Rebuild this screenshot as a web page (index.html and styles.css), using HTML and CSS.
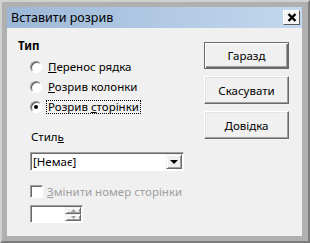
FILE: index.html
```html
<!DOCTYPE html>
<html>
<head>
<meta http-equiv="Content-Type" content="text/html; charset=utf-8" />
<title>Вставити розрив</title>
<link rel="stylesheet" href="styles.css">
</head>
<body>
	<div class="window">
		<div class="titlebar">
			<span class="title">Вставити розрив</span>
			<span class="close">
				<svg width="10" height="9" viewBox="0 0 10 9"><path d="M1.5 1 L8.5 8 M8.5 1 L1.5 8" stroke="#000" stroke-width="2.4" fill="none"/></svg>
			</span>
		</div>

		<div class="content">
			<div class="main">
				<div class="group-title">Тип</div>
				<ul class="options">
					<li><span class="radio"></span><span class="label"><u>П</u>еренос рядка</span></li>
					<li><span class="radio"></span><span class="label"><u>Р</u>озрив колонки</span></li>
					<li><span class="radio checked"></span><span class="label focus">Розрив <u>с</u>торінки</span></li>
				</ul>

				<div class="field-label">Стил<u>ь</u></div>
				<div class="combo">
					<span class="combo-text">[Немає]</span>
					<span class="combo-btn">
						<svg width="8" height="4" viewBox="0 0 8 4"><path d="M0 0 H8 L4 4 Z" fill="#000"/></svg>
					</span>
				</div>

				<div class="check-row">
					<span class="checkbox"></span><span class="label disabled"><u>З</u>мінити номер сторінки</span>
				</div>

				<div class="spin">
					<span class="spin-text"></span>
					<span class="spin-btns">
						<span class="spin-btn"><svg width="5" height="3" viewBox="0 0 5 3"><path d="M0 3 H5 L2.5 0 Z" fill="#a0a0a0"/></svg></span>
						<span class="spin-btn"><svg width="5" height="3" viewBox="0 0 5 3"><path d="M0 0 H5 L2.5 3 Z" fill="#a0a0a0"/></svg></span>
					</span>
				</div>
			</div>

			<div class="side">
				<div class="btn default">Гаразд</div>
				<div class="btn">Скасувати</div>
				<div class="btn"><span><u>Д</u>овідка</span></div>
			</div>
		</div>
	</div>
</body>
</html>
```

FILE: styles.css
```css
*{
	padding: 0;
	margin: 0;
	box-sizing: border-box;
}
body{
	font-family: "Noto Sans", "Open Sans", sans-serif;
	font-size: 11.5px;
	color: #000;
	background: #fff;
}
u{
	text-underline-offset: 1px;
}
.window{
	width: 310px;
	height: 243px;
	background: #b0b0b0;
	border-style: solid;
	border-width: 2px;
	border-color: #d0d0d0 #7c7c7c #7c7c7c #d0d0d0;
	padding: 5px 6px 5px 5px;
	display: flex;
	flex-direction: column;
}
.titlebar{
	height: 21px;
	flex-shrink: 0;
	background: linear-gradient(to right, #9db8d7, #c3d8ee);
	display: flex;
	align-items: center;
	justify-content: space-between;
	padding: 0 2px 0 4px;
}
.title{
	font-size: 12.5px;
}
.close{
	width: 17px;
	height: 15px;
	background: #f4f4f4;
	border: 1px solid;
	border-color: #fff #5a5a5a #5a5a5a #fff;
	display: flex;
	align-items: center;
	justify-content: center;
}
.content{
	flex: 1;
	background: #f0f0f0;
	display: flex;
}
.main{
	flex: 1;
	padding: 10px 0 0 11px;
}
.group-title{
	font-weight: bold;
	line-height: 15px;
}
.options{
	list-style: none;
	margin: 4px 0 0 12px;
}
.options li{
	height: 20px;
	display: flex;
	align-items: center;
	gap: 5px;
}
.radio{
	width: 12px;
	height: 12px;
	border-radius: 50%;
	background: #fff;
	border: 1px solid;
	border-color: #8a8a8a #fff #fff #8a8a8a;
	box-shadow: inset 1px 1px 0 #5a5a5a;
	display: flex;
	align-items: center;
	justify-content: center;
	flex-shrink: 0;
}
.radio.checked::after{
	content: "";
	width: 4px;
	height: 4px;
	border-radius: 50%;
	background: #000;
}
.label{
	line-height: 12px;
	padding: 0 1px;
}
.label.focus{
	outline: 1px dotted #000;
}
.label.disabled{
	color: #a0a0a0;
}
.field-label{
	line-height: 15px;
	margin: 12px 0 0 13px;
}
.combo{
	width: 154px;
	height: 19px;
	margin: 8px 0 0 12px;
	background: #fff;
	border: 1px solid;
	border-color: #a0a0a0 #fff #fff #a0a0a0;
	box-shadow: inset 1px 1px 0 #696969;
	display: flex;
	align-items: center;
	padding: 1px 1px 1px 2px;
}
.combo-text{
	flex: 1;
	line-height: 15px;
}
.combo-btn{
	width: 16px;
	height: 15px;
	background: #f0f0f0;
	border: 1px solid;
	border-color: #f0f0f0 #696969 #696969 #f0f0f0;
	box-shadow: inset 1px 1px 0 #fff, inset -1px -1px 0 #a0a0a0;
	display: flex;
	align-items: center;
	justify-content: center;
}
.check-row{
	margin: 14px 0 0 12px;
	height: 13px;
	display: flex;
	align-items: center;
	gap: 3px;
}
.checkbox{
	width: 13px;
	height: 13px;
	background: #fff;
	border: 1px solid;
	border-color: #a0a0a0 #fff #fff #a0a0a0;
	box-shadow: inset 1px 1px 0 #696969;
	flex-shrink: 0;
}
.spin{
	width: 53px;
	height: 18px;
	margin: 7px 0 0 12px;
	background: #fff;
	border: 1px solid;
	border-color: #a0a0a0 #fff #fff #a0a0a0;
	box-shadow: inset 1px 1px 0 #696969;
	display: flex;
	padding: 1px 1px 1px 2px;
}
.spin-text{
	flex: 1;
}
.spin-btns{
	width: 16px;
	display: flex;
	flex-direction: column;
}
.spin-btn{
	flex: 1;
	background: #f0f0f0;
	border: 1px solid;
	border-color: #f0f0f0 #696969 #696969 #f0f0f0;
	box-shadow: inset 1px 1px 0 #fff, inset -1px -1px 0 #a0a0a0;
	display: flex;
	align-items: center;
	justify-content: center;
}
.side{
	width: 85px;
	margin-right: 13px;
	padding-top: 14px;
	display: flex;
	flex-direction: column;
	gap: 7px;
}
.btn{
	height: 28px;
	background: #f0f0f0;
	border: 1px solid;
	border-color: #fff #696969 #696969 #fff;
	box-shadow: inset -1px -1px 0 #a0a0a0, inset 1px 1px 0 #e3e3e3;
	display: flex;
	align-items: center;
	justify-content: center;
}
.btn.default{
	height: 27px;
	border-color: #696969;
	box-shadow: inset 1px 1px 0 #fff, inset -1px -1px 0 #696969, inset -2px -2px 0 #a0a0a0;
}
```
